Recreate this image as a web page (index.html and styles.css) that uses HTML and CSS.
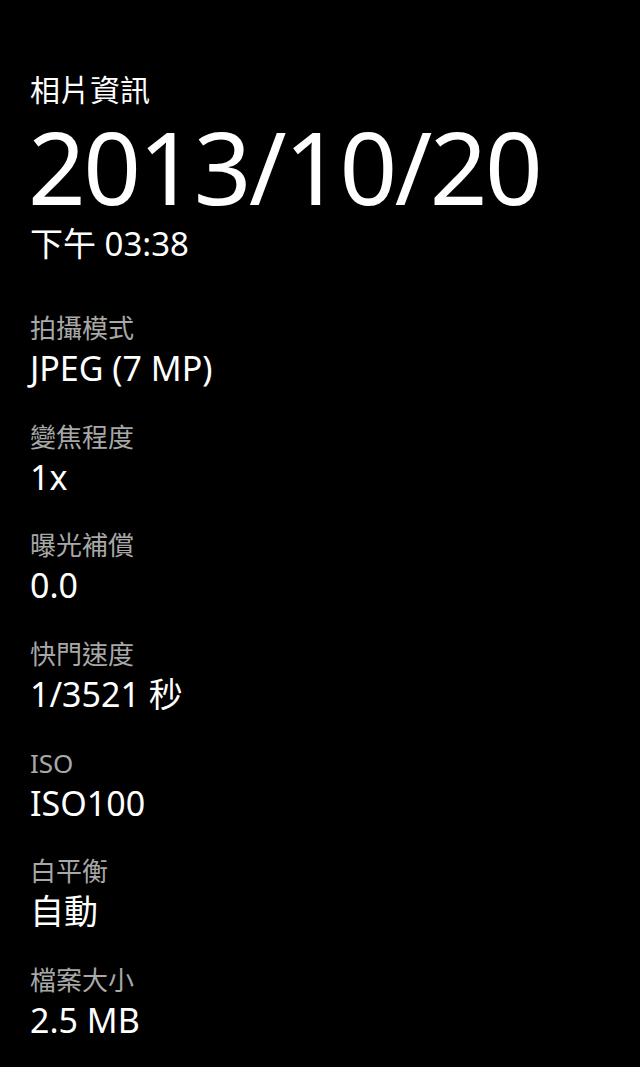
FILE: index.html
```html
<!DOCTYPE html>
<html lang="zh-Hant">
<head>
    <meta charset="UTF-8">
    <title>相片資訊</title>
    <link rel="stylesheet" href="styles.css">
</head>
<body>

    <!-- 標題與拍攝時間 -->
    <header class="head">
        <div class="title">相片資訊</div>
        <div class="date">2013/10/20</div>
        <div class="time">下午 03:38</div>
    </header>

    <!-- 相片詳細資料 -->
    <section class="info">
        <div class="row">
            <div class="label">拍攝模式</div>
            <div class="value">JPEG (7 MP)</div>
        </div>
        <div class="row">
            <div class="label">變焦程度</div>
            <div class="value">1x</div>
        </div>
        <div class="row">
            <div class="label">曝光補償</div>
            <div class="value">0.0</div>
        </div>
        <div class="row">
            <div class="label">快門速度</div>
            <div class="value">1/3521 秒</div>
        </div>
        <div class="row">
            <div class="label">ISO</div>
            <div class="value">ISO100</div>
        </div>
        <div class="row">
            <div class="label">白平衡</div>
            <div class="value">自動</div>
        </div>
        <div class="row">
            <div class="label">檔案大小</div>
            <div class="value">2.5 MB</div>
        </div>
    </section>

</body>
</html>
```

FILE: styles.css
```css
/* 黑色背景的相片資訊頁 */
body {
    margin: 0;
    background-color: #000;
    color: #fff;
    font-family: "Noto Sans", "Noto Sans CJK TC", sans-serif;
}

.head {
    padding: 70px 30px 0 30px;
}

.title {
    font-size: 30px;
    line-height: 40px;
}

.date {
    margin-top: 4px;
    margin-left: -2px;
    font-size: 101px;
    line-height: 104px;
    letter-spacing: -2.5px;
}

.time {
    margin-top: 8px;
    font-size: 33px;
    line-height: 36px;
}

.info {
    padding: 48px 30px 0 30px;
    display: flex;
    flex-direction: column;
}

.row {
    height: 108.7px;
}

.label {
    font-size: 26px;
    line-height: 36px;
    color: #a8a8a8;
}

.value {
    font-size: 34px;
    line-height: 44px;
}
```
